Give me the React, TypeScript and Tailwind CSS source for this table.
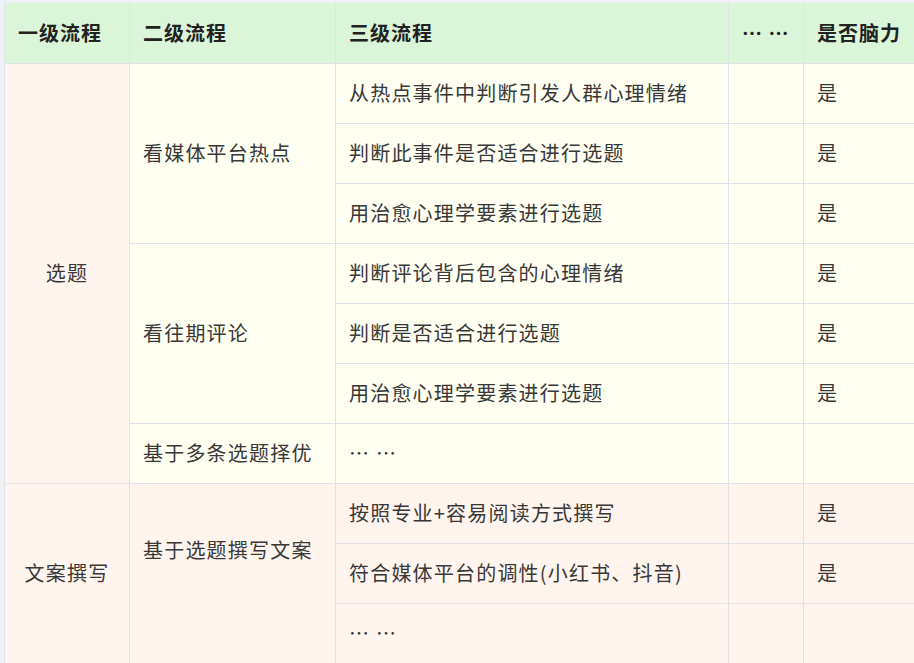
import React from 'react';

type Row = {
  l1?: { text: string; span: number; bg: string };
  l2?: { text: string; span: number; bg: string; top?: boolean };
  l3: string;
  yes: string;
  bg: string;
};

const IVORY = 'bg-[#fffff2]';
const PEACH = 'bg-[#fff5ee]';

const rows: Row[] = [
  { l1: { text: '选题', span: 7, bg: PEACH }, l2: { text: '看媒体平台热点', span: 3, bg: IVORY }, l3: '从热点事件中判断引发人群心理情绪', yes: '是', bg: IVORY },
  { l3: '判断此事件是否适合进行选题', yes: '是', bg: IVORY },
  { l3: '用治愈心理学要素进行选题', yes: '是', bg: IVORY },
  { l2: { text: '看往期评论', span: 3, bg: IVORY }, l3: '判断评论背后包含的心理情绪', yes: '是', bg: IVORY },
  { l3: '判断是否适合进行选题', yes: '是', bg: IVORY },
  { l3: '用治愈心理学要素进行选题', yes: '是', bg: IVORY },
  { l2: { text: '基于多条选题择优', span: 1, bg: IVORY }, l3: '… …', yes: '', bg: IVORY },
  { l1: { text: '文案撰写', span: 3, bg: PEACH }, l2: { text: '基于选题撰写文案', span: 3, bg: PEACH, top: true }, l3: '按照专业+容易阅读方式撰写', yes: '是', bg: PEACH },
  { l3: '符合媒体平台的调性(小红书、抖音)', yes: '是', bg: PEACH },
  { l3: '… …', yes: '', bg: PEACH },
];

const cell = 'border border-[#dfe2e6] px-[13px] h-[60px] align-middle whitespace-nowrap';

const App: React.FC = () => {
  return (
    <div className="w-[914px] h-[663px] overflow-hidden bg-[#eef0f3] pt-[3px] pl-[4px] font-['Noto_Sans_CJK_SC','Noto_Sans',sans-serif] text-[20px] tracking-[1.2px] text-[#383838]">
      <table className="table-fixed border-collapse w-[930px]">
        <colgroup>
          <col className="w-[125px]" />
          <col className="w-[206px]" />
          <col className="w-[393px]" />
          <col className="w-[75px]" />
          <col className="w-[131px]" />
        </colgroup>
        <thead>
          <tr className="bg-[#daf5d7] text-left font-bold text-[#222] tracking-[1px]">
            <th className={`${cell} h-[58px] border-t-0`}>一级流程</th>
            <th className={`${cell} h-[58px] border-t-0`}>二级流程</th>
            <th className={`${cell} h-[58px] border-t-0`}>三级流程</th>
            <th className={`${cell} h-[58px] border-t-0`}>… …</th>
            <th className={`${cell} h-[58px] border-t-0`}>是否脑力</th>
          </tr>
        </thead>
        <tbody>
          {rows.map((r, i) => (
            <tr key={i}>
              {r.l1 && (
                <td rowSpan={r.l1.span} className={`${cell} ${r.l1.bg} text-center`}>
                  {r.l1.text}
                </td>
              )}
              {r.l2 && (
                <td
                  rowSpan={r.l2.span}
                  className={`${cell} ${r.l2.bg} ${r.l2.top ? 'align-top pt-[51px]' : ''}`}
                >
                  {r.l2.text}
                </td>
              )}
              <td className={`${cell} ${r.bg}`}>{r.l3}</td>
              <td className={`${cell} ${r.bg}`}></td>
              <td className={`${cell} ${r.bg}`}>{r.yes}</td>
            </tr>
          ))}
        </tbody>
      </table>
    </div>
  );
};

export default App;
